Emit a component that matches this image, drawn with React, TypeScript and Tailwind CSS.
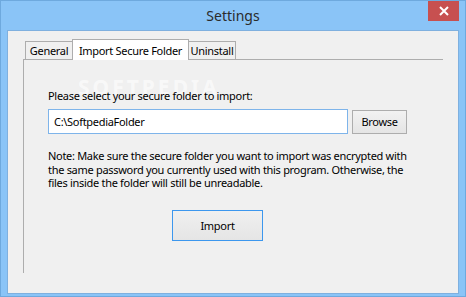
import React from "react";

const font = { fontFamily: '"Noto Sans", "Segoe UI", Tahoma, sans-serif' };

export default function App() {
  return (
    <div
      className="w-[466px] h-[297px] bg-[#8ac4f7] border border-[#6ea9de] flex flex-col relative overflow-hidden"
      style={font}
    >
      {/* Title bar */}
      <div className="h-[29px] flex items-center justify-center text-[14px] text-[#2b2b2b] shrink-0">
        Settings
      </div>
      <div className="absolute right-[6px] top-0 w-[31px] h-[20px] bg-[#c75050] flex items-center justify-center">
        <svg width="10" height="10" viewBox="0 0 10 10">
          <path d="M1 1 L9 9 M9 1 L1 9" stroke="#fff" strokeWidth="2" />
        </svg>
      </div>
      {/* Client area */}
      <div className="mx-[6px] mb-[2px] flex-1 bg-[#f0f0f0] border border-[#7fb0df] relative">
        <div className="pt-[7px] pl-[15px]">
          {/* tabs */}
          <div className="flex items-end h-[21px] pl-[2px] text-[11px] tracking-[-0.3px] text-black">
            <div className="w-[48px] h-[18px] border border-b-0 border-[#adadad] bg-[#f0f0f0] flex items-center justify-center leading-none">
              General
            </div>
            <div className="w-[117px] h-[21px] -ml-px border border-b-0 border-[#adadad] bg-white flex items-center justify-center leading-none -mb-px relative z-10">
              Import Secure Folder
            </div>
            <div className="w-[48px] h-[18px] -ml-px border border-b-0 border-[#adadad] bg-[#f0f0f0] flex items-center justify-center leading-none">
              Uninstall
            </div>
          </div>
          {/* panel */}
          <div className="w-[420px] h-[214px] border-l border-t border-[#adadad] relative">
            <div className="absolute left-[54px] top-[17px] text-[21px] font-bold tracking-[3px] text-white/60 leading-none select-none">
              SOFTPEDIA
            </div>
            <div className="pl-[24px] pt-[29px] text-[11px] tracking-[-0.3px] text-black relative">
              <div className="leading-[14px]">Please select your secure folder to import:</div>
              <div className="flex items-center mt-[6px]">
                <div className="w-[300px] h-[25px] border border-[#7eb4ea] bg-white flex items-center pl-[5px] leading-none">
                  C:\SoftpediaFolder
                </div>
                <div className="ml-[4px] w-[55px] h-[24px] border border-[#adadad] bg-gradient-to-b from-[#f2f2f2] to-[#e5e5e5] flex items-center justify-center leading-none">
                  Browse
                </div>
              </div>
              <div className="mt-[15px] leading-[13.5px] w-[365px]">
                Note: Make sure the secure folder you want to import was encrypted with the same password you currently used with this program. Otherwise, the files inside the folder will still be unreadable.
              </div>
              <div className="mt-[20px] ml-[124px] w-[91px] h-[31px] border border-[#3c97ee] bg-gradient-to-b from-[#f0f0f0] to-[#e5e5e5] flex items-center justify-center leading-none">
                Import
              </div>
            </div>
          </div>
        </div>
      </div>
    </div>
  );
}
